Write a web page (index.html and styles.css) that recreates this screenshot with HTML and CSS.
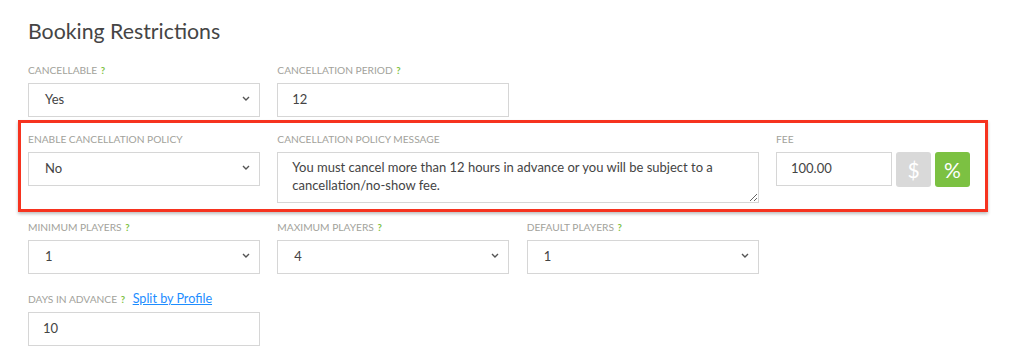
FILE: index.html
```html
<!DOCTYPE html>
<html lang="en">
<head>
<meta charset="UTF-8">
<title>Booking Restrictions</title>
<link rel="stylesheet" href="styles.css">
</head>
<body>

  <div class="panel">
    <h2 class="title">Booking Restrictions</h2>

    <div class="row">
      <div class="group">
        <label class="label">Cancellable <span class="help">?</span></label>
        <div class="select"><span>Yes</span>
          <svg class="chev" viewBox="0 0 8 5" width="8" height="5"><path d="M1 1l3 3 3-3"/></svg>
        </div>
      </div>
      <div class="group">
        <label class="label">Cancellation Period <span class="help">?</span></label>
        <input class="input" type="text" value="12">
      </div>
    </div>

    <div class="highlight">
      <div class="row">
        <div class="group">
          <label class="label">Enable Cancellation Policy</label>
          <div class="select"><span>No</span>
            <svg class="chev" viewBox="0 0 8 5" width="8" height="5"><path d="M1 1l3 3 3-3"/></svg>
          </div>
        </div>
        <div class="group wide">
          <label class="label">Cancellation Policy Message</label>
          <textarea class="textarea">You must cancel more than 12 hours in advance or you will be subject to a cancellation/no-show fee.</textarea>
        </div>
        <div class="group">
          <label class="label">Fee</label>
          <div class="fee">
            <input class="input fee-input" type="text" value="100.00">
            <button class="unit">$</button>
            <button class="unit active">%</button>
          </div>
        </div>
      </div>
    </div>

    <div class="row">
      <div class="group">
        <label class="label">Minimum Players <span class="help">?</span></label>
        <div class="select"><span>1</span>
          <svg class="chev" viewBox="0 0 8 5" width="8" height="5"><path d="M1 1l3 3 3-3"/></svg>
        </div>
      </div>
      <div class="group">
        <label class="label">Maximum Players <span class="help">?</span></label>
        <div class="select"><span>4</span>
          <svg class="chev" viewBox="0 0 8 5" width="8" height="5"><path d="M1 1l3 3 3-3"/></svg>
        </div>
      </div>
      <div class="group">
        <label class="label">Default Players <span class="help">?</span></label>
        <div class="select"><span>1</span>
          <svg class="chev" viewBox="0 0 8 5" width="8" height="5"><path d="M1 1l3 3 3-3"/></svg>
        </div>
      </div>
    </div>

    <div class="row">
      <div class="group">
        <label class="label">Days in Advance <span class="help">?</span> <a class="link" href="#">Split by Profile</a></label>
        <input class="input" type="text" value="10">
      </div>
    </div>
  </div>

</body>
</html>
```

FILE: styles.css
```css
body {
  margin: 0;
  background: #fff;
  font-family: Lato, "Open Sans", sans-serif;
  color: #444;
}
.panel {
  padding: 19px 0 0 28px;
}
.title {
  margin: 0 0 19px;
  font-size: 21.3px;
  font-weight: normal;
  line-height: 25px;
  color: #454545;
}
.row {
  display: grid;
  grid-template-columns: repeat(4, 232px);
  column-gap: 17.33px;
  margin-bottom: 18px;
}
.group.wide {
  grid-column: span 2;
}
.label {
  display: block;
  height: 14px;
  margin-bottom: 6px;
  font-size: 10.2px;
  line-height: 14px;
  text-transform: uppercase;
  color: #a2a29b;
  white-space: nowrap;
}
.help {
  margin-left: 1px;
  font-weight: bold;
  font-size: 9.5px;
  color: #7cc142;
}
.link {
  margin-left: 5px;
  font-size: 12.6px;
  line-height: 14px;
  text-transform: none;
  color: #1e8dff;
}
.select, .input, .textarea {
  box-sizing: border-box;
  height: 34px;
  border: 1px solid #d6d6d6;
  background: #fff;
  font-family: Lato, "Open Sans", sans-serif;
  font-size: 13px;
  color: #444;
}
.select {
  display: flex;
  align-items: center;
  justify-content: space-between;
  padding: 0 9px 3px 16px;
}
.chev {
  fill: none;
  stroke: #555;
  stroke-width: 1.4px;
}
.input {
  display: block;
  width: 100%;
  margin: 0;
  padding: 0 14px 3px;
  outline: none;
}
.textarea {
  display: block;
  width: 100%;
  height: 51px;
  margin: 0;
  padding: 5px 14px;
  line-height: 18px;
  outline: none;
}
.highlight {
  box-sizing: border-box;
  width: 970px;
  margin: -15px 0 8px -10px;
  padding: 9px 7px 6px;
  border: 3px solid #f6331f;
  box-shadow: 0 2px 3px rgba(0, 0, 0, 0.25);
}
.highlight .row {
  margin-bottom: 0;
}
.fee {
  display: flex;
  gap: 4px;
}
.fee-input {
  width: 116px;
}
.unit {
  width: 35px;
  height: 35px;
  padding: 0;
  border: none;
  border-radius: 3px;
  background: #d9d9d9;
  color: #fff;
  font-family: Lato, sans-serif;
  font-size: 21px;
}
.unit.active {
  background: #7cc142;
}
```
